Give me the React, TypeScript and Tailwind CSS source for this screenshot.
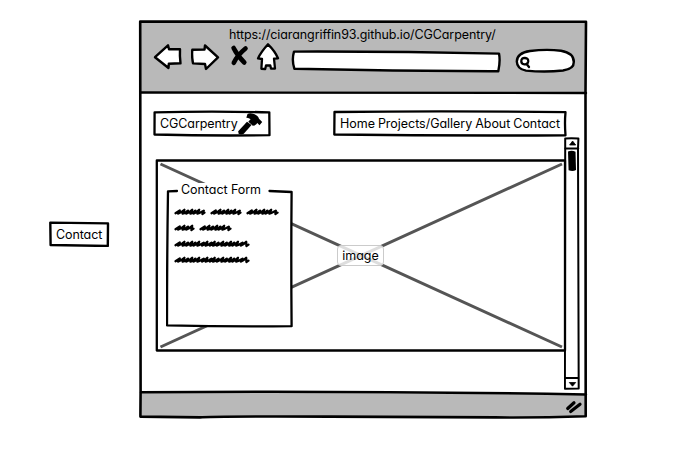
import type { ReactNode } from "react";

const ink = { fill: "none", stroke: "#000", strokeLinecap: "round", strokeLinejoin: "round" } as const;

/* A run of hand-scrawled loops standing in for a word. */
function Scribble({ width }: { width: number }) {
  let d = "M1.5 6.2 L5.8 3.4";
  let x = 5.8;
  const steps = [4.6, 3.6, 4.2, 3.2, 3.8];
  let i = 0;
  while (x < width - 5.5) {
    const step = steps[i % steps.length];
    d += ` L${x - 1.8} 6.6 Q${x + 0.8} 6 ${x + step} ${i % 2 ? 3.6 : 2.8}`;
    x += step;
    i++;
  }
  d += ` L${width - 3.6} 7 L${width - 1.5} 5.6`;
  return (
    <svg width={width} height="9" viewBox={`0 0 ${width} 9`} className="shrink-0 overflow-visible">
      <path d={d} {...ink} strokeWidth="2.3" />
    </svg>
  );
}

function LabelBox({ className, frame, children }: { className: string; frame: ReactNode; children: ReactNode }) {
  return (
    <div className={`relative flex items-center whitespace-nowrap ${className}`}>
      {frame}
      {children}
    </div>
  );
}

function Toolbar() {
  return (
    <div className="mt-px flex h-8 items-start pl-[15px]">
      <svg width="29" height="28" viewBox="153 43 29 28">
        <path d="M155 57.2 L168 45.3 L169 49.3 L180 49.3 Q179.6 56 180.5 63.3 L168.8 63.8 L168.5 68 Z" {...ink} fill="#fff" strokeWidth="2.4" />
      </svg>
      <svg width="29" height="28" viewBox="191 43 29 28" className="ml-[9px]">
        <path d="M192.3 49.8 L204.5 49.6 L205 45.5 L218 57.3 L206 69 L205 64 L193 63.4 Q191.6 56 192.3 49.8 Z" {...ink} fill="#fff" strokeWidth="2.4" />
      </svg>
      <svg width="20" height="28" viewBox="230 43 20 28" className="ml-[10px]">
        <path d="M233.6 48 Q237.5 56 244.3 62.5 M245.5 48.5 Q237.5 55 233.8 62.8" {...ink} strokeWidth="4.6" />
      </svg>
      <svg width="24" height="28" viewBox="256 43 24 28" className="ml-[6px]">
        <path d="M268 44.3 Q275 51 278 58.3 L274 58.6 L275 68.5 L271 68.6 L270.3 65.5 L266 65.5 L265.2 69 L261.4 68.8 L262 59 L258 58.4 Q261 52 268 44.3 Z" {...ink} fill="#fff" strokeWidth="2.3" />
      </svg>
      <svg width="212" height="28" viewBox="291 47 212 28" className="ml-[11px] mt-1">
        <path d="M294 51.6 Q397 51.3 499 53.6 Q500.5 61 498.3 71.2 Q397 71.3 294.4 68.8 Q291.5 60 294 51.6 Z" {...ink} fill="#fff" strokeWidth="2.4" />
      </svg>
      <svg width="62" height="28" viewBox="515 47 62 28" className="ml-[12px] mt-1">
        <path d="M516.8 61.5 Q517 52.8 530 51 Q546 49 561 50.7 Q574 53 573.8 62 Q574 69 563 70.5 Q545 72.5 526 70.6 Q517 69 516.8 61.5 Z" {...ink} fill="#fff" strokeWidth="2.4" />
        <path d="M521.3 61.2 Q521.3 57.8 525 58 Q528.6 58.4 528.2 61.5 Q527.5 64.8 524.5 64.4 Q521.3 64 521.3 61.2 M526.8 64.2 L529 67" {...ink} strokeWidth="2.3" />
      </svg>
    </div>
  );
}

function Hammer() {
  return (
    <svg width="26" height="23" viewBox="237 112 26 23" className="relative shrink-0">
      <path d="M238.2 131.2 L247 121.8 L251.5 125 L243.8 133.8 Q241 135.2 238.6 133.8 Z" />
      <path d="M246.3 117.8 L247.5 114 Q249.5 112.6 254 113.9 Q258.2 115.5 259 118.8 L262.2 122 L259.5 125.2 L257.3 123 Q256.4 125.3 252.8 125.8 L248.3 121.8 L250.6 119.3 Q249 117.6 246.3 117.8 Z" />
    </svg>
  );
}

function ContactForm() {
  return (
    <section className="relative ml-[10px] mt-[23px] h-[145px] w-[128px]">
      <svg className="absolute inset-0" width="128" height="145" viewBox="166 183 128 145">
        <path d="M168 191 L292 191.5 L292 326.5 L168 325.5 Z" fill="#fff" />
        <path d="M178 183 H268 V194 H178 Z" fill="#fff" />
        <path d="M177 191 L168 191.3 Q167 258 167 325.3 Q230 327 291.6 326.2 Q291 258 291.6 192 L269.5 191" {...ink} strokeWidth="2.3" />
      </svg>
      <div className="relative pl-[15px]">
        <h2 className="h-[14px] text-[12.5px] leading-[14px] tracking-[-0.05px]">Contact Form</h2>
      </div>
      <div className="relative flex flex-col gap-[7px] pl-[8px] pt-[10px]">
        <div className="flex gap-[4px]">
          <Scribble width={32} /><Scribble width={32} /><Scribble width={33} />
        </div>
        <div className="flex gap-[4px]">
          <Scribble width={21} /><Scribble width={33} />
        </div>
        <Scribble width={76} />
        <Scribble width={76} />
      </div>
    </section>
  );
}

export default function App() {
  return (
    <main className="flex h-[474px] w-[687px] overflow-hidden bg-white font-['Inter','Lato',sans-serif] text-[12.5px] text-black [font-feature-settings:'cv11']">
      <aside className="w-[138px] shrink-0 pl-[48px] pt-[221px]">
        <LabelBox
          className="h-[26px] w-[62px] pl-[8px] pt-[2px]"
          frame={
            <svg className="absolute inset-0" width="62" height="26" viewBox="48 221 62 26">
              <path d="M50.3 222.6 L108 223.4 L107.8 246 L50.6 245 Z" {...ink} strokeWidth="2.4" />
            </svg>
          }
        >
          <span className="relative tracking-[-0.1px]">Contact</span>
        </LabelBox>
      </aside>

      <div className="relative mt-[20px] flex h-[399px] w-[450px] shrink-0 flex-col">
        <svg className="absolute inset-0" width="450" height="399" viewBox="138 20 450 399">
          <path d="M141 21.5 L586 22 V93 H141 Z" fill="#b9b9b9" />
          <path d="M141 392 L586 394.5 V416 L141 417 Z" fill="#b9b9b9" />
          <path d="M140.2 21.5 L586 21.8 L585.5 93 L585.7 416.2 Q540 417.8 495 417.4 T330 416.6 T200 417.4 L140.4 416.6 L140.6 390 Q140.6 250 140.2 21.5 Z" {...ink} strokeWidth="2.6" />
          <path d="M141 92.5 L586 93 M141 392.2 Q360 390.5 586 394.5" {...ink} strokeWidth="2.4" />
        </svg>

        <header className="relative h-[73px]">
          <p className="h-[22px] pl-[91px] pt-[7px] text-[12.5px] leading-[15px] tracking-[-0.1px] whitespace-nowrap">https://ciarangriffin93.github.io/CGCarpentry/</p>
          <Toolbar />
        </header>

        <div className="relative h-[300px]">
          <div className="flex h-[45px] justify-between pl-[15px] pr-[21px] pt-[17px]">
            <LabelBox
              className="h-[27px] w-[118px] pl-[7px]"
              frame={
                <svg className="absolute inset-0" width="118" height="27" viewBox="153 110 118 27">
                  <path d="M154.6 112.3 Q212 111 269.3 112.3 L269.5 135.2 Q212 136 154.5 134.5 Z" {...ink} strokeWidth="2.3" />
                </svg>
              }
            >
              <span className="relative w-[77px] pt-[2px] tracking-[-0.08px]">CGCarpentry</span>
              <Hammer />
            </LabelBox>
            <LabelBox
              className="h-[27px] w-[235px] pl-[8px] pt-[2px]"
              frame={
                <svg className="absolute inset-0" width="235" height="27" viewBox="332 110 235 27">
                  <path d="M334.5 112 Q450 110.8 565.5 112.2 Q564.5 123 565.5 135.3 Q450 136 334.3 134.5 Z" {...ink} strokeWidth="2.3" />
                </svg>
              }
            >
              <nav className="relative flex gap-[3px] tracking-[-0.03px]">
                <a>Home</a><a>Projects/Gallery</a><a>About</a><a>Contact</a>
              </nav>
            </LabelBox>
          </div>

          <div className="flex pl-[18px]">
            <div className="relative mt-[22px] h-[192px] w-[408px]">
              <svg className="absolute inset-0 overflow-visible" width="408" height="192" viewBox="156 160 408 192">
                <path d="M160.5 164 L562 347 M160.5 347 L562 164" stroke="#555" strokeWidth="3" />
                <path d="M156.8 160.5 H565 V350.5 H156.8 Z" {...ink} strokeWidth="2.3" />
              </svg>
              <span className="absolute left-[181px] top-[85px] flex h-[21px] w-[47px] items-center justify-center rounded-[4px] border border-[#cbcbcb] bg-white/80 pt-[2px]">image</span>
              <ContactForm />
            </div>
            <svg width="18" height="254" viewBox="564 137 18 254" className="mt-[-1px]">
              <path d="M565.2 138.5 Q572 137.8 578.4 138.6 L578 148.5 L578.7 388.6 L564.9 388.8 L565.2 148.5 Z" {...ink} fill="#fff" strokeWidth="2" />
              <path d="M565.3 148.5 H578.3 M565.3 378 H578.3" {...ink} strokeWidth="1.9" />
              <path d="M572.6 141 L575.7 145 H569.6 Z M572.5 386.2 L569.3 382.5 H575.7 Z" stroke="#000" strokeWidth="0.8" strokeLinejoin="round" />
              <path d="M568 151.5 Q572 149.8 575.5 151.8 L576 170 Q573 172 568.6 170.3 Z" />
            </svg>
          </div>
        </div>

        <footer className="relative flex h-[26px] justify-end pr-[3px] pt-[7px]">
          <svg width="20" height="14" viewBox="565 400 20 14">
            <path d="M567.7 408.5 L574 402.8 M570.7 411.5 L580 404.3" {...ink} strokeWidth="3.2" />
          </svg>
        </footer>
      </div>
    </main>
  );
}
